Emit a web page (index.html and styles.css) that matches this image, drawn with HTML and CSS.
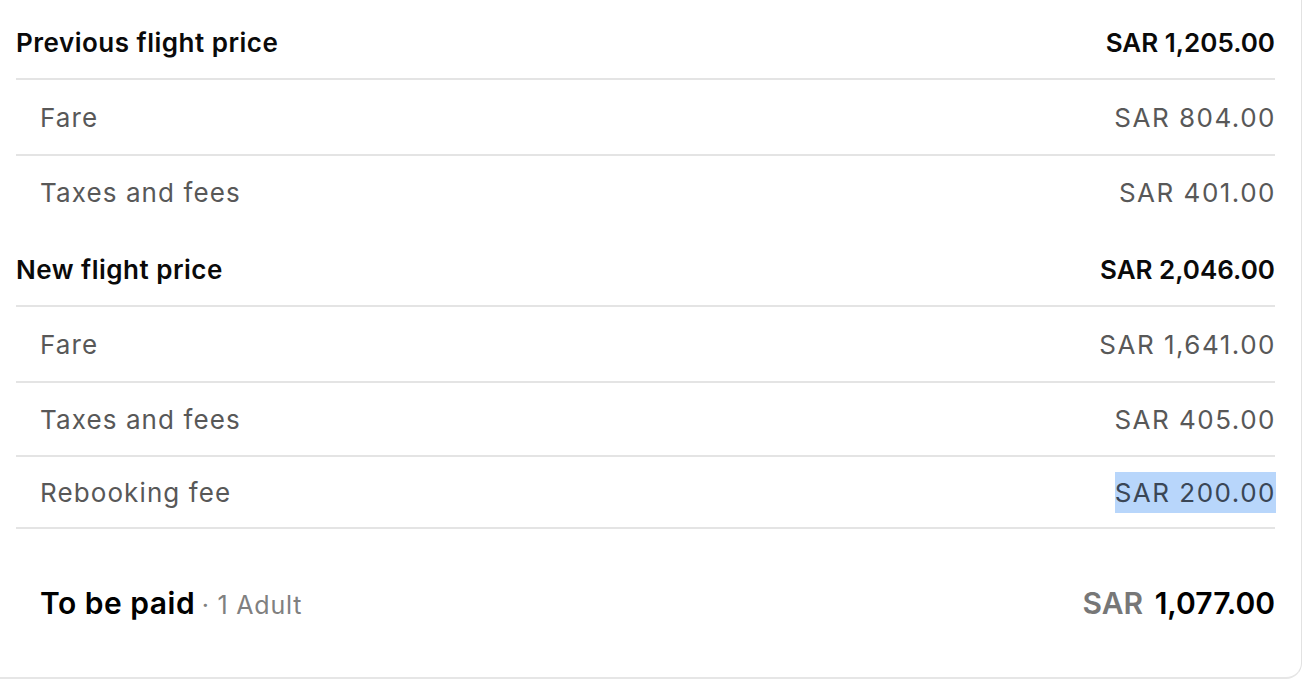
FILE: index.html
```html
<!DOCTYPE html>
<html lang="en">
<head>
    <meta charset="UTF-8">
    <meta name="viewport" content="width=device-width, initial-scale=1.0">
    <title>Price breakdown</title>
    <link rel="stylesheet" href="styles.css">
</head>
<body>
    <div class="card">
        <div class="section">
            <div class="row head">
                <span>Previous flight price</span>
                <span class="num">SAR 1,205.00</span>
            </div>
            <div class="row sub">
                <span>Fare</span>
                <span class="num">SAR 804.00</span>
            </div>
            <div class="row sub">
                <span>Taxes and fees</span>
                <span class="num">SAR 401.00</span>
            </div>
        </div>

        <div class="section second">
            <div class="row head">
                <span>New flight price</span>
                <span class="num">SAR 2,046.00</span>
            </div>
            <div class="row sub">
                <span>Fare</span>
                <span class="num">SAR 1,641.00</span>
            </div>
            <div class="row sub">
                <span>Taxes and fees</span>
                <span class="num">SAR 405.00</span>
            </div>
            <div class="row sub last">
                <span>Rebooking fee</span>
                <span class="num selected">SAR 200.00</span>
            </div>
        </div>

        <div class="total">
            <div class="total-label">
                <strong>To be paid</strong>
                <span class="pax">· 1 Adult</span>
            </div>
            <div class="total-amount">
                <span class="currency">SAR</span>
                <span class="amount">1,077.00</span>
            </div>
        </div>
    </div>
</body>
</html>
```

FILE: styles.css
```css
body {
    margin: 0;
    font-family: Inter, "Liberation Sans", sans-serif;
    background-color: #fff;
    color: #111;
}

.card {
    padding: 6px 26px 0 16px;
    border-right: 1px solid #e2e2e2;
    border-bottom: 2px solid #e6e6e6;
    border-bottom-right-radius: 16px;
}

.section.second {
    margin-top: 5px;
}

.row {
    display: flex;
    justify-content: space-between;
    align-items: center;
    height: 74px;
    box-sizing: border-box;
}

.head {
    font-size: 26px;
    font-weight: 600;
    letter-spacing: 0.5px;
    color: #0a0a0a;
    border-bottom: 2px solid #e4e4e4;
}

.head .num {
    letter-spacing: 0;
}

.sub {
    padding-left: 24px;
    font-size: 26px;
    letter-spacing: 1.1px;
    color: #585858;
}

.sub .num {
    letter-spacing: 1.5px;
    margin-right: -1px;
}

.sub + .sub {
    border-top: 2px solid #e4e4e4;
}

.sub.last {
    border-bottom: 2px solid #e4e4e4;
}

.selected {
    background-color: #b8d6fb;
    color: #3a4656;
    padding: 5px 0;
}

.total {
    display: flex;
    justify-content: space-between;
    align-items: center;
    height: 148px;
    padding-left: 24px;
}

.total-label strong {
    font-size: 30px;
    font-weight: 600;
    letter-spacing: 0.5px;
    color: #000;
}

.pax {
    font-size: 25px;
    letter-spacing: 0.8px;
    color: #808080;
    margin-left: 2px;
}

.total-amount {
    font-size: 30px;
    font-weight: 600;
}

.currency {
    color: #777;
    margin-right: 4px;
}

.amount {
    color: #000;
}
```
